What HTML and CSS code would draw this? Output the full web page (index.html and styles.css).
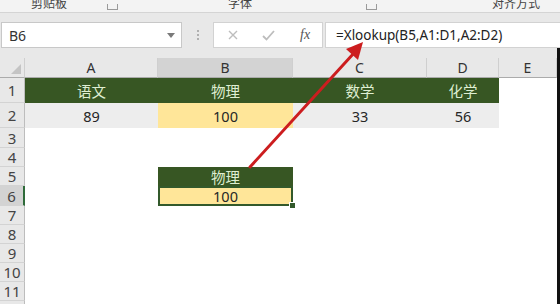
FILE: index.html
```html
<!DOCTYPE html>
<html>
<head>
<meta charset="utf-8">
<link rel="stylesheet" href="styles.css">
</head>
<body>
<div class="app">
  <div class="ribbon">
    <span class="grp g1">剪贴板</span>
    <span class="launch l1"></span>
    <span class="grp g2">字体</span>
    <span class="launch l2"></span>
    <span class="grp g3">对齐方式</span>
  </div>
  <div class="fbar">
    <div class="namebox">
      <span class="nb-text">B6</span>
      <svg class="nb-caret" width="8" height="5" viewBox="0 0 8 5"><path d="M0 0H8L4 5Z" fill="#7a7a7a"/></svg>
    </div>
    <div class="dots"><i></i><i></i><i></i></div>
    <div class="btns">
      <svg class="ic-x" width="10" height="10" viewBox="0 0 10 10"><path d="M1 1L9 9M9 1L1 9" stroke="#bdbdbd" stroke-width="1.4" fill="none"/></svg>
      <svg class="ic-ok" width="13" height="11" viewBox="0 0 13 11"><path d="M1 6L4.5 9.5L12 1" stroke="#bdbdbd" stroke-width="1.8" fill="none"/></svg>
      <span class="fx">fx</span>
    </div>
    <div class="formula">=Xlookup(B5,A1:D1,A2:D2)</div>
  </div>
  <div class="sheet">
    <div class="corner"><svg width="10" height="10" viewBox="0 0 10 10"><path d="M10 0V10H0Z" fill="#c4c4c4"/></svg></div>
    <div class="ch">A</div><div class="ch sel-col">B</div><div class="ch">C</div><div class="ch">D</div><div class="ch">E</div>

    <div class="rh">1</div><div class="c hd">语文</div><div class="c hd">物理</div><div class="c hd">数学</div><div class="c hd">化学</div><div class="c"></div>
    <div class="rh">2</div><div class="c gy">89</div><div class="c yl">100</div><div class="c gy">33</div><div class="c gy">56</div><div class="c"></div>
    <div class="rh">3</div><div class="c"></div><div class="c"></div><div class="c"></div><div class="c"></div><div class="c"></div>
    <div class="rh">4</div><div class="c"></div><div class="c"></div><div class="c"></div><div class="c"></div><div class="c"></div>
    <div class="rh">5</div><div class="c"></div><div class="c hd">物理</div><div class="c"></div><div class="c"></div><div class="c"></div>
    <div class="rh sel-row">6</div><div class="c"></div><div class="c yl active">100</div><div class="c"></div><div class="c"></div><div class="c"></div>
    <div class="rh">7</div><div class="c"></div><div class="c"></div><div class="c"></div><div class="c"></div><div class="c"></div>
    <div class="rh">8</div><div class="c"></div><div class="c"></div><div class="c"></div><div class="c"></div><div class="c"></div>
    <div class="rh">9</div><div class="c"></div><div class="c"></div><div class="c"></div><div class="c"></div><div class="c"></div>
    <div class="rh">10</div><div class="c"></div><div class="c"></div><div class="c"></div><div class="c"></div><div class="c"></div>
    <div class="rh">11</div><div class="c"></div><div class="c"></div><div class="c"></div><div class="c"></div><div class="c"></div>
    <div class="rh">12</div><div class="c"></div><div class="c"></div><div class="c"></div><div class="c"></div><div class="c"></div>
  </div>
  <div class="edge"></div>
  <svg class="arrow" width="560" height="304" viewBox="0 0 560 304">
    <line x1="250" y1="167" x2="354" y2="53" stroke="#cc1d1f" stroke-width="3" stroke-linecap="round"/>
    <polygon points="363,42 358,60 346,49" fill="#cc1d1f"/>
  </svg>
</div>
</body>
</html>
```
FILE: styles.css
```css
html, body {
  margin: 0;
  padding: 0;
  background: #fff;
}
.app {
  position: relative;
  width: 560px;
  height: 304px;
  overflow: hidden;
  background: #fff;
  font-family: "Noto Sans", "Noto Sans CJK SC", sans-serif;
  color: #222;
}
.ribbon {
  height: 12px;
  background: #f3f3f3;
  border-bottom: 1px solid #d4d4d4;
  display: flex;
  align-items: flex-end;
  overflow: hidden;
  font-family: "Noto Sans CJK SC", sans-serif;
  font-size: 12px;
  line-height: 12px;
  color: #444;
}
.grp {
  margin-bottom: 3px;
  white-space: nowrap;
}
.g1 { margin-left: 31px; }
.g2 { margin-left: 110px; }
.g3 { margin-left: 115px; }
.launch {
  width: 9px;
  height: 5px;
  border: 1px solid #9a9a9a;
  border-top: none;
  margin-bottom: 2px;
}
.l1 { margin-left: 40px; }
.l2 { margin-left: 114px; }

.fbar {
  display: flex;
  height: 26px;
  padding: 9px 0 10px;
  background: #e8e8e8;
}
.namebox {
  width: 181px;
  margin-left: 1px;
  box-sizing: border-box;
  background: #fff;
  border: 1px solid #c8c8c8;
  display: flex;
  align-items: center;
  justify-content: space-between;
  padding: 0 6px 0 7px;
  font-size: 14px;
  color: #333;
}
.dots {
  width: 31px;
  display: flex;
  flex-direction: column;
  align-items: center;
  justify-content: center;
  gap: 2px;
}
.dots i {
  width: 2px;
  height: 2px;
  background: #b0b0b0;
}
.btns {
  width: 110px;
  box-sizing: border-box;
  background: #fff;
  border: 1px solid #d2d2d2;
  display: flex;
  align-items: center;
}
.ic-x { margin-left: 14px; }
.ic-ok { margin-left: 24px; }
.fx {
  margin-left: 25px;
  font-family: "Liberation Serif", serif;
  font-style: italic;
  font-size: 14px;
  color: #555;
}
.formula {
  flex: 1;
  margin-left: 2px;
  background: #fff;
  border: 1px solid #d2d2d2;
  border-right: none;
  padding-left: 10px;
  font-size: 13.5px;
  line-height: 24px;
  color: #222;
  white-space: nowrap;
}

.sheet {
  display: grid;
  grid-template-columns: 25px 133px 135px 134px 72px 58px;
  grid-template-rows: 20px 25px 25px 20px 19px 19px 20px 19px 19px 19px 19px 19px 19px;
}
.corner {
  background: #e8e8e8;
  border-right: 1px solid #cfcfcf;
  border-bottom: 1px solid #ababab;
  box-sizing: border-box;
  display: flex;
  align-items: flex-end;
  justify-content: flex-end;
  padding: 0 3px 3px 0;
}
.ch {
  background: #e8e8e8;
  border-right: 1px solid #cfcfcf;
  border-bottom: 1px solid #ababab;
  box-sizing: border-box;
  display: flex;
  align-items: center;
  justify-content: center;
  font-size: 14px;
  color: #333;
}
.ch.sel-col {
  background: #d3d3d3;
}
.rh {
  background: #e8e8e8;
  border-right: 1px solid #bdbdbd;
  border-bottom: 1px solid #d3d3d3;
  box-sizing: border-box;
  display: flex;
  align-items: center;
  justify-content: center;
  font-size: 15px;
  color: #444;
}
.rh.sel-row {
  background: #d3d3d3;
  border-right: 2px solid #2f6b3a;
}
.c {
  display: flex;
  align-items: center;
  justify-content: center;
  font-family: "Noto Sans", "Noto Sans CJK SC", sans-serif;
  font-size: 14.5px;
  color: #262626;
}
.c.hd {
  background: #375623;
  color: #dfeed2;
}
.c.gy {
  background: #ededed;
}
.c.yl {
  background: #ffe699;
}
.c.active {
  position: relative;
  box-shadow: inset 0 0 0 2px #33592b;
}
.c.active::after {
  content: "";
  position: absolute;
  right: -3px;
  bottom: -3px;
  width: 5px;
  height: 5px;
  background: #33592b;
  border: 1px solid #fff;
}
.edge {
  position: absolute;
  right: 0;
  top: 48px;
  width: 3px;
  bottom: 0;
  background: #111;
}
.arrow {
  position: absolute;
  left: 0;
  top: 0;
  pointer-events: none;
}
```
